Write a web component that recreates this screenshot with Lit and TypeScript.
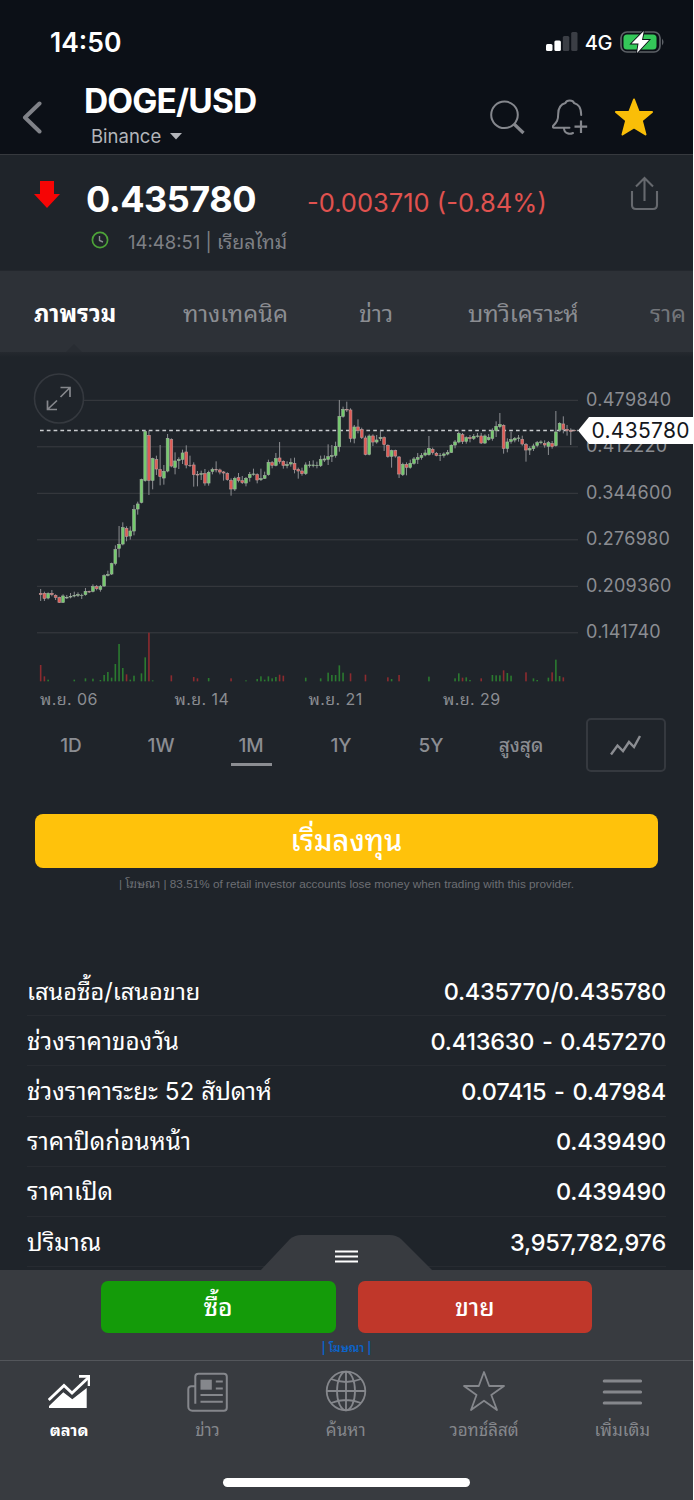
import { LitElement, html, svg, css } from "lit";
import { customElement } from "lit/decorators.js";
import { classMap } from "lit/directives/class-map.js";

// Candle rows: body top, body bottom, high, low, direction (1 up, 0 down), in plot units.
type Candle = [number, number, number, number, number];
const CANDLES: Candle[] = [
  [684,690,672,708,0],[684,701,680,708,0],[684,700,682,703,1],[684,690,675,694,0],[690,698,688,705,0],[697,713,695,714,0],
  [692,713,688,714,1],[697,699,690,702,1],[693,697,684,700,1],[690,694,680,697,1],[688,692,682,696,1],[690,692,686,702,1],
  [678,690,669,692,1],[679,682,677,684,0],[664,680,658,682,1],[664,672,660,676,0],[664,674,660,680,1],[631,664,628,665,1],
  [628,632,617,634,1],[595,628,593,630,1],[553,596,541,601,1],[537,551,483,577,1],[487,538,472,541,1],[489,515,484,529,0],
  [497,514,484,524,1],[433,499,420,511,1],[416,433,410,449,1],[343,413,341,415,1],[198,348,197,350,1],[210,347,197,390,0],
  [280,347,278,373,1],[283,313,272,330,0],[313,336,240,361,0],[318,340,300,359,1],[219,319,207,322,1],[223,304,220,307,0],
  [287,308,262,328,1],[283,288,277,312,1],[263,284,254,297,1],[260,301,241,310,0],[300,303,272,306,0],[299,330,292,365,0],
  [327,331,318,364,0],[325,329,317,345,1],[325,355,312,362,0],[321,355,317,362,1],[313,320,308,328,1],[313,315,289,322,0],
  [314,322,311,328,0],[320,325,318,347,0],[325,345,322,347,0],[345,373,340,392,0],[339,373,335,378,1],[337,347,324,352,0],
  [346,354,333,357,0],[339,355,336,364,1],[327,339,321,350,1],[326,329,311,332,1],[328,346,325,355,0],[340,345,311,348,1],
  [331,341,320,342,1],[291,330,284,332,1],[292,302,288,310,0],[280,302,264,304,1],[278,290,231,296,0],[288,302,286,311,0],
  [298,303,289,310,1],[292,298,280,305,1],[294,315,278,325,0],[312,319,308,341,0],[317,327,308,332,0],[299,327,292,330,1],
  [299,303,288,308,1],[299,303,286,307,1],[300,303,290,310,1],[283,303,272,306,1],[281,286,271,291,1],[274,284,238,300,1],
  [271,275,240,291,1],[243,272,230,278,1],[153,246,105,260,1],[132,155,125,158,1],[132,136,110,141,0],[134,221,130,232,0],
  [185,221,180,235,1],[185,198,163,205,0],[193,218,188,222,0],[218,269,212,271,0],[212,269,208,271,1],[212,232,208,243,0],
  [224,232,210,236,1],[217,222,196,228,1],[217,240,214,258,0],[240,275,238,278,0],[256,275,254,308,1],[256,274,254,278,0],
  [275,328,273,339,0],[297,330,293,333,1],[297,308,292,331,0],[294,308,284,311,1],[281,296,276,299,1],[277,284,264,297,1],
  [271,278,264,284,1],[263,271,254,274,1],[249,270,213,272,1],[252,264,248,269,0],[264,272,261,274,0],[270,273,264,288,1],
  [266,272,262,278,1],[262,268,255,271,1],[240,263,238,264,1],[230,241,225,250,1],[204,232,200,235,1],[208,230,204,237,0],
  [217,230,214,236,1],[217,222,210,232,0],[213,221,207,225,1],[212,215,204,218,1],[212,235,204,237,0],[212,235,208,237,1],
  [217,225,207,227,1],[196,221,190,227,1],[183,198,169,216,1],[178,186,144,190,1],[180,251,178,266,0],[230,251,220,262,1],
  [223,230,200,236,1],[220,226,216,232,1],[218,221,210,230,1],[222,238,212,242,0],[238,256,234,290,0],[250,256,244,270,1],
  [242,252,236,258,1],[232,242,228,247,1],[230,234,226,238,1],[234,241,226,248,0],[232,245,228,270,1],[234,246,228,251,0],
  [200,243,138,245,1],[174,196,172,200,1],[176,194,154,205,0],[192,198,180,212,0],[196,200,190,240,0],[195,197,194,199,0],
];

// Volume rows: candle index, bar top, direction.
const VOLUMES: [number, number, number][] = [
  [0,900,0],[1,934,0],[2,944,1],[9,944,1],[12,940,1],[14,941,1],[16,945,1],[17,930,1],[18,921,1],[19,938,1],[20,897,1],
  [21,837,1],[22,909,1],[23,928,0],[24,944,1],[25,932,1],[27,925,1],[28,877,1],[29,803,0],[30,946,1],[35,931,0],[41,936,0],
  [42,940,0],[45,939,1],[51,940,0],[55,946,1],[58,942,1],[59,934,1],[60,944,1],[61,934,1],[62,940,1],[63,936,1],[64,929,0],
  [65,932,0],[71,938,1],[75,940,1],[77,923,1],[78,930,1],[79,930,1],[80,901,1],[81,923,1],[83,925,0],[87,929,0],[93,937,0],
  [94,942,1],[96,930,0],[104,935,1],[111,940,1],[112,925,1],[113,938,0],[114,937,1],[115,945,1],[118,940,0],[121,930,1],
  [122,931,1],[123,931,1],[124,916,0],[125,924,1],[126,932,1],[130,922,0],[132,940,1],[133,945,1],[136,938,1],[137,922,0],
  [138,884,1],[139,933,1],[140,937,0],
];

const STEP = 11.2;
const cx = (i: number) => 62 + i * STEP;

@customElement("price-chart")
export class PriceChart extends LitElement {
  static styles = css`
    :host { display: block; }
    svg { display: block; font-family: Inter, "Noto Sans Thai Looped", Loma, Garuda, Umpush, Waree, "Noto Sans Thai", sans-serif; }
    .grid { stroke: #3a3d42; stroke-width: 1; }
    .last { stroke: #c9cccf; stroke-width: 1.4; stroke-dasharray: 3.7 3.1; }
    .wick { stroke: #8d8f93; stroke-width: 3; }
    .up { fill: #74cb6c; stroke: #9fb09e; stroke-width: 1.8; }
    .down { fill: #e05a54; stroke: #b99a9a; stroke-width: 1.8; }
    .vup { fill: #2b7a30; }
    .vdown { fill: #8c2b2f; }
    .axis { fill: #8b8d92; font-size: 18px; letter-spacing: 0.3px; }
    .date { fill: #8b8d92; font-size: 16px; letter-spacing: 0.45px; }
    .tag { fill: #ffffff; }
    .tagtext { fill: #14171c; font-size: 21px; letter-spacing: 0.3px; }
    .ring { fill: #1f242a; stroke: #35393f; stroke-width: 1.6; }
    .arrows { fill: none; stroke: #85878c; stroke-width: 1.7; }
  `;

  render() {
    const prices = ["0.479840", "0.412220", "0.344600", "0.276980", "0.209360", "0.141740"];
    const dates: [number, string][] = [[40, "พ.ย. 06"], [174.5, "พ.ย. 14"], [308.5, "พ.ย. 21"], [443, "พ.ย. 29"]];
    return html`
      <svg width="693" height="355" viewBox="0 365 693 355">
        ${prices.map((p, i) => svg`
          <line class="grid" x1="37" x2="578" y1=${400.3 + i * 46.5} y2=${400.3 + i * 46.5} />
          <text class="axis" x="586" y=${405.5 + i * 46.5}>${p}</text>`)}
        <line class="last" x1="40" x2="578" y1="430.5" y2="430.5" />
        <g transform="translate(20 365) scale(.33333)">
          ${CANDLES.map(([t, b, h, l, up], i) => svg`
            <line class="wick" x1=${cx(i)} x2=${cx(i)} y1=${h} y2=${l} />
            <rect class=${up ? "up" : "down"} x=${cx(i) - 4.2} y=${t + 0.9} width="8.4" height=${Math.max(1, b - t - 1.8)} />`)}
          ${VOLUMES.map(([i, t, up]) => svg`
            <rect class=${up ? "vup" : "vdown"} x=${cx(i) - 2.4} y=${t} width="4.8" height=${949 - t} />`)}
        </g>
        <path class="tag" d="M578 430.5 L589 417 H693 V444 H589 Z" />
        <text class="tagtext" x="591.5" y="438">0.435780</text>
        <circle class="ring" cx="59" cy="398.5" r="24.5" />
        <path class="arrows" d="M60.5 397 L70 387.5 M60.5 387.5 H70 V397 M57 400.5 L47.5 409.5 M47.5 400.5 V409.5 H57" />
        ${dates.map(([x, d]) => svg`<text class="date" x=${x} y="705">${d}</text>`)}
      </svg>`;
  }
}

@customElement("app-root")
export class AppRoot extends LitElement {
  static styles = css`
    :host {
      display: flex; flex-direction: column; width: 693px; height: 1500px;
      box-sizing: border-box; overflow: hidden; background: #1f242a;
      font-family: Inter, "Noto Sans Thai Looped", Loma, Garuda, Umpush, Waree, "Noto Sans Thai", sans-serif; color: #fff;
    }
    * { box-sizing: border-box; }
    svg { display: block; flex: none; }
    .line { display: flex; align-items: center; white-space: nowrap; }
    .head { height: 155px; background: #0c1017; border-bottom: 1px solid #36393e; flex: none; }
    .status { height: 84px; padding: 0 28px 0 50px; justify-content: space-between; }
    .time { font-size: 26.5px; font-weight: 600; letter-spacing: 0; }
    .signals { display: flex; align-items: center; }
    .net { font-size: 20px; font-weight: 500; margin: 1px 8px 0 7px; letter-spacing: -0.4px; }
    .bar { display: flex; height: 70px; padding: 0 40px 0 22px; }
    .back { padding-top: 17px; width: 62px; }
    .names { flex: 1; }
    .pair { font-size: 33.5px; line-height: 34px; font-weight: 700; letter-spacing: -0.85px; }
    .source { font-size: 18.5px; line-height: 24px; margin-top: 6px; padding-left: 7px; gap: 9px; color: #b3b5ba; letter-spacing: 0; }
    .tools { display: flex; gap: 27px; padding-top: 14px; }
    .quote { display: flex; height: 115px; flex: none; padding: 0 34px; }
    .dir { width: 52px; padding-top: 26px; }
    .qmain { flex: 1; }
    .prices { height: 47px; margin-top: 20px; }
    .price { font-size: 36px; font-weight: 700; letter-spacing: -0.5px; width: 221px; }
    .change { font-size: 25.5px; color: #e0524f; margin-top: 7px; }
    .stamp { height: 34px; margin-top: 1px; padding-left: 5px; gap: 19px; font-size: 18.5px; color: #7e8085; }
    .stamp span { padding-top: 1px; }
    .stamp b { font-weight: 400; font-size: 19.5px; }
    .share { padding-top: 21px; margin-right: -1px; }
    .tabs { height: 82px; flex: none; background: #2d3137; padding: 0 0 0 34px; font-size: 23.6px; color: #8b8d92; overflow: hidden; border-top: 1px solid #23272d; position: relative; }
    .notch { position: absolute; left: 66px; bottom: 0; }
    .tab { flex: none; padding-bottom: 1px; }
    .tab.on { color: #fff; font-weight: 700; }
    .t0 { width: 149px; } .t1 { width: 176px; } .t2 { width: 109px; } .t3 { width: 182px; } .t4 { opacity: .75; }
    .body { flex: none; height: 918px; padding-top: 13px; overflow: hidden; background: linear-gradient(#25292f, #1f242a 5px); }
    .ranges { display: flex; height: 54px; margin-top: -2px; padding: 0 27px 0 26px; color: #8b8d92; font-size: 19px; }
    .range { width: 90px; display: flex; flex-direction: column; align-items: center; padding-top: 16px; line-height: 24px; font-weight: 500; white-space: nowrap; }
    .mark { width: 41px; height: 3px; background: #8b8d92; margin-top: 5px; }
    .style { width: 80px; margin-left: 20px; border: 2px solid #35393f; border-radius: 5px; display: flex; align-items: center; justify-content: center; }
    .invest { height: 54px; margin: 42px 35px 0; padding-bottom: 6px; border-radius: 8px; background: #ffc20b; display: flex; align-items: center; justify-content: center; font-size: 29px; font-weight: 500; }
    .legal { text-align: center; font: 11.75px/16px "Liberation Sans", "Noto Sans Thai Looped", Loma, Garuda, Umpush, Waree, "Noto Sans Thai", sans-serif; color: #6d6f74; margin-top: 8px; white-space: nowrap; }
    .facts { padding: 0 27px; margin-top: 74px; }
    .fact { height: 50.2px; padding-top: 1px; display: flex; align-items: center; justify-content: space-between; border-bottom: 1px solid #272b31; font-size: 24.3px; }
    .fact:first-child { font-size: 23.6px; }
    .name { margin-bottom: 4px; }
    .value { font-weight: 500; font-size: 23.5px; letter-spacing: -0.25px; word-spacing: 1.7px; }
    .trade { position: relative; height: 90px; flex: none; background: #383b40; }
    .handle { position: absolute; left: 260px; top: -36px; }
    .buttons { display: flex; gap: 22px; padding: 11px 101px 0; }
    .btn { height: 52px; flex: 1; padding-bottom: 4px; border-radius: 7px; display: flex; align-items: center; justify-content: center; font-size: 24.5px; font-weight: 500; }
    .buy { background: #149b09; } .sell { background: #c0372a; }
    .ad { text-align: center; color: #0b63c9; font-size: 11.7px; line-height: 16px; margin-top: 7px; font-weight: 600; }
    .nav { height: 140px; flex: none; background: #383b40; border-top: 1px solid #53565b; position: relative; display: flex; }
    .item { width: 138.3px; display: flex; flex-direction: column; align-items: center; padding-top: 9px; font-size: 17px; line-height: 24px; color: #85878c; gap: 6px; white-space: nowrap; }
    .item.on { color: #fff; font-weight: 700; font-size: 16.3px; }
    .home { position: absolute; left: 223px; top: 117px; width: 247px; height: 9px; border-radius: 5px; background: #fff; }
  `;

  private icon(name: string) {
    switch (name) {
      case "market":
        return svg`<path d="M0.7 30 L16 15.5 L24 23 L40.5 7.5" fill="none" stroke="#fff" stroke-width="2.8"/><path d="M31 6.4 H41 V16" fill="none" stroke="#fff" stroke-width="2.6"/><path d="M1 38 V36 L15.3 22.3 L24.3 29.3 L38.7 18 V38 Z" fill="#fff"/>`;
      case "news":
        return svg`<g transform="translate(.8 -.3)"><g fill="none" stroke="#85878c" stroke-width="2"><path d="M8.5 34 V7 a3 3 0 0 1 3-3 H37 a3 3 0 0 1 3 3 V38 a3 3 0 0 1-3 3 H5.5 a4 4 0 0 1-4-4 V19.5 a3 3 0 0 1 3-3 H8"/><path d="M29 11.7 H36 M29 18.7 H36 M13.7 25.3 H36 M13.7 32 H36"/></g><rect x="13.7" y="10" width="11.3" height="10" fill="#85878c"/></g>`;
      case "globe":
        return svg`<g fill="none" stroke="#85878c" stroke-width="1.8"><circle cx="21" cy="21" r="19.3"/><ellipse cx="21" cy="21" rx="9" ry="19.3"/><path d="M21 1.5 V40.5 M1.5 21 H40.5 M6 9 Q21 15 36 9 M6 33 Q21 27 36 33"/></g>`;
      case "star":
        return svg`<path d="M21 2 L26.2 16 H41 L28.3 25 L34 40 L21 30.7 L8 40 L13.5 25 L1 16 H15.8 Z" fill="none" stroke="#85878c" stroke-width="1.8" stroke-linejoin="round"/>`;
      default:
        return svg`<path d="M3.2 11 H39.6 M3.2 22 H39.6 M3.2 33 H39.6" stroke="#85878c" stroke-width="3" stroke-linecap="round"/>`;
    }
  }

  render() {
    const tabs = ["ภาพรวม", "ทางเทคนิค", "ข่าว", "บทวิเคราะห์", "ราค"];
    const ranges = ["1D", "1W", "1M", "1Y", "5Y", "สูงสุด"];
    const facts = [
      ["เสนอซื้อ/เสนอขาย", "0.435770/0.435780"],
      ["ช่วงราคาของวัน", "0.413630 - 0.457270"],
      ["ช่วงราคาระยะ 52 สัปดาห์", "0.07415 - 0.47984"],
      ["ราคาปิดก่อนหน้า", "0.439490"],
      ["ราคาเปิด", "0.439490"],
      ["ปริมาณ", "3,957,782,976"],
    ];
    const nav = [["market", "ตลาด"], ["news", "ข่าว"], ["globe", "ค้นหา"], ["star", "วอทช์ลิสต์"], ["more", "เพิ่มเติม"]];
    return html`
      <header class="head">
        <div class="line status">
          <span class="time">14:50</span>
          <div class="signals">
            <svg width="32" height="20" viewBox="0 0 32 20">
              <rect x="0" y="12" width="6.5" height="7" rx="1.5" fill="#fff"/><rect x="8.4" y="8.5" width="6.5" height="10.5" rx="1.5" fill="#fff"/>
              <rect x="16.8" y="4" width="6.5" height="15" rx="1.5" fill="#3b3e45"/><rect x="25.2" y="0" width="6.3" height="19" rx="1.5" fill="#3b3e45"/>
            </svg>
            <span class="net">4G</span>
            <svg width="45" height="24" viewBox="0 0 45 24">
              <rect x="1" y="2" width="39" height="20" rx="6" fill="none" stroke="#5d6167" stroke-width="1.7"/>
              <rect x="3.5" y="4.5" width="33" height="15" rx="3.5" fill="#34c759"/>
              <path d="M42 8.5 Q45 12 42 15.5 Z" fill="#5d6167"/>
              <path d="M23.8 1 L11.5 13.5 H18.5 L17 23 L29 10 H22 Z" fill="#fff" stroke="#0c1017" stroke-width="1.8" paint-order="stroke"/>
            </svg>
          </div>
        </div>
        <div class="bar">
          <div class="back"><svg width="20" height="34" viewBox="0 0 20 34"><path d="M17.5 2.5 L3 16.5 L17.5 30.5" fill="none" stroke="#808288" stroke-width="4" stroke-linecap="round" stroke-linejoin="round"/></svg></div>
          <div class="names">
            <div class="line pair">DOGE/USD</div>
            <div class="line source"><span>Binance</span><svg width="12" height="7" viewBox="0 0 12 7"><path d="M0 0 H12 L6 6.5 Z" fill="#b3b5ba"/></svg></div>
          </div>
          <div class="tools">
            <svg width="36" height="38" viewBox="0 0 36 38"><circle cx="15.5" cy="16.8" r="13.3" fill="none" stroke="#85878d" stroke-width="2"/><path d="M25 26 L34.5 35" stroke="#85878d" stroke-width="3.2"/></svg>
            <svg width="36" height="38" viewBox="0 0 36 38"><path d="M17.5 29.8 H2 Q0.5 29.5 1 28 C5 24 6.2 22 6.2 16 C6.2 9 9 6.2 13.5 5 C14.5 1.8 21 1.8 22 5 C26.5 6.5 29 9 29.2 17 M12 30 C12 36 18 36.5 21 35" fill="none" stroke="#85878d" stroke-width="2" stroke-linecap="round"/><path d="M29 22.5 V35 M22.5 28.7 H35.2" stroke="#85878d" stroke-width="2.2"/></svg>
            <svg width="38" height="38" viewBox="0 0 38 38"><path d="M19 1.5 L23.8 14 H37 L26.8 22.5 L30.5 36.5 L19 29.5 L7.5 36.5 L11.2 22.5 L1 14 H14.2 Z" fill="#fabe08" stroke="#fabe08" stroke-width="2" stroke-linejoin="round"/></svg>
          </div>
        </div>
      </header>
      <section class="quote">
        <div class="dir"><svg width="26" height="27" viewBox="0 0 26 27"><path d="M6 0 H20 V13 H26 L13 27 L0 13 H6 Z" fill="#f60505"/></svg></div>
        <div class="qmain">
          <div class="line prices"><span class="price">0.435780</span><span class="change">-0.003710 (-0.84%)</span></div>
          <div class="line stamp">
            <svg width="18" height="18" viewBox="0 0 18 18"><circle cx="9" cy="9" r="7.6" fill="none" stroke="#4da338" stroke-width="1.7"/><path d="M8.5 5 V9.5 L12 11" fill="none" stroke="#8b8d92" stroke-width="1.4"/></svg>
            <span>14:48:51 | <b>เรียลไทม์</b></span>
          </div>
        </div>
        <div class="share"><svg width="30" height="36" viewBox="0 0 30 36"><path d="M2 15 V29 Q2 33 6 33 H23 Q27 33 27 29 V15 M14.5 25 V2 M6 10.5 L14.5 2 L23 10.5" fill="none" stroke="#66696e" stroke-width="2.1"/></svg></div>
      </section>
      <nav class="line tabs">
        ${tabs.map((t, i) => html`<span class=${classMap({ tab: true, on: i === 0, ["t" + i]: true })}>${t}</span>`)}
        <svg class="notch" width="16" height="8" viewBox="0 0 16 8"><path d="M0 8 L8 0 L16 8 Z" fill="#282c32"/></svg>
      </nav>
      <main class="body">
        <price-chart></price-chart>
        <div class="ranges">
          ${ranges.map((r) => html`<div class="range"><span>${r}</span>${r === "1M" ? html`<i class="mark"></i>` : ""}</div>`)}
          <div class="style"><svg width="32" height="22" viewBox="0 0 32 22"><path d="M1 20.5 L7.5 11.5 L13 17 L19 8 L24 13 L30 2" fill="none" stroke="#8b8d92" stroke-width="2.4"/></svg></div>
        </div>
        <div class="invest"><span>เริ่มลงทุน</span></div>
        <div class="legal">| โฆษณา | 83.51% of retail investor accounts lose money when trading with this provider.</div>
        <div class="facts">
          ${facts.map(([k, v]) => html`<div class="fact"><span class="name">${k}</span><span class="value">${v}</span></div>`)}
        </div>
      </main>
      <section class="trade">
        <svg class="handle" width="174" height="37" viewBox="0 0 174 37"><path d="M0 37 L30 5 Q35 1 41 1 H130 Q136 1 141 5 L173 37 Z" fill="#383b40"/><path d="M75 17.5 H98 M75 22.5 H98 M75 27.5 H98" stroke="#fff" stroke-width="1.8"/></svg>
        <div class="buttons"><div class="btn buy">ซื้อ</div><div class="btn sell">ขาย</div></div>
        <div class="ad">| โฆษณา |</div>
      </section>
      <nav class="nav">
        ${nav.map(([n, label], i) => html`<div class=${classMap({ item: true, on: i === 0 })}><svg width="42" height="42" viewBox="0 0 42 42">${this.icon(n)}</svg><span>${label}</span></div>`)}
        <div class="home"></div>
      </nav>`;
  }
}
